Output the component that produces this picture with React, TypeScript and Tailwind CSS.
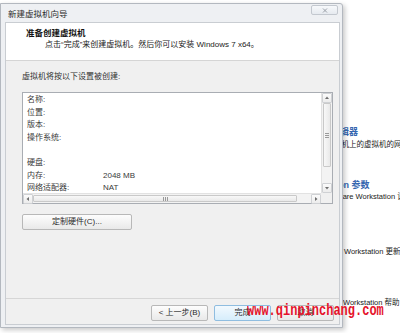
import React from "react";

type Dir = "up" | "down" | "left" | "right";

const points: Record<Dir, string> = {
  up: "1,4 3,1.5 5,4",
  down: "1,2 3,4.5 5,2",
  left: "4,1 1.5,3 4,5",
  right: "2,1 4.5,3 2,5",
};

function ArrowBox({ dir }: { dir: Dir }) {
  return (
    <div className="w-[10px] h-[10px] shrink-0 flex items-center justify-center border border-[#cfd1d4] bg-gradient-to-b from-[#fbfbfb] to-[#ececec] rounded-[1px]">
      <svg width="6" height="6" viewBox="0 0 6 6">
        <polygon points={points[dir]} fill="#6e6e6e" />
      </svg>
    </div>
  );
}

function Grip({ vertical }: { vertical?: boolean }) {
  return (
    <div className={vertical ? "flex flex-col gap-[1px]" : "flex gap-[1px]"}>
      {[0, 1, 2].map((i) => (
        <div
          key={i}
          className={vertical ? "w-[4px] h-[1px] bg-[#9a9a9a]" : "w-[1px] h-[4px] bg-[#9a9a9a]"}
        />
      ))}
    </div>
  );
}

const rows: [string, string][] = [
  ["名称:", ""],
  ["位置:", ""],
  ["版本:", ""],
  ["操作系统:", ""],
  ["", ""],
  ["硬盘:", ""],
  ["内存:", "2048 MB"],
  ["网络适配器:", "NAT"],
];

function Button({
  children,
  primary,
  className = "",
}: {
  children: React.ReactNode;
  primary?: boolean;
  className?: string;
}) {
  return (
    <div
      className={`h-[16px] flex items-center justify-center rounded-[2px] border text-[8px] leading-none text-[#2a2a2a] ${
        primary
          ? "border-[#8fbde0] bg-gradient-to-b from-[#f2f9fe] to-[#d6edfb]"
          : "border-[#b8b8b8] bg-gradient-to-b from-[#fdfdfd] to-[#e9e9e9]"
      } ${className}`}
    >
      {children}
    </div>
  );
}

export default function App() {
  return (
    <div className="w-[400px] h-[333px] bg-white overflow-hidden flex relative font-['Liberation_Sans','Noto_Sans_CJK_SC',sans-serif] text-[#1e1e1e]">
      {/* Wizard dialog */}
      <div className="w-[343px] shrink-0 pt-[3px] relative z-10">
        <div className="w-[343px] h-[325px] flex flex-col border border-[#b3b8bf] rounded-tr-[3px] bg-[#eef0f3] shadow-[2px_2px_5px_rgba(0,0,0,0.22)]">
          {/* Title bar */}
          <div className="h-[18px] shrink-0 flex items-start justify-between pl-[7px] pr-[4px]">
            <span className="mt-[6px] text-[8.5px] leading-[9px] text-[#2b2b2b]">新建虚拟机向导</span>
            <div className="mt-[1px] w-[27px] h-[10px] flex items-center justify-center border border-[#c3c8cf] rounded-[2px] bg-gradient-to-b from-[#f7f9fb] to-[#e6eaef]">
              <svg width="6" height="5" viewBox="0 0 6 5">
                <path d="M1 0.5 L5 4.5 M5 0.5 L1 4.5" stroke="#9aa0a8" strokeWidth="1" />
              </svg>
            </div>
          </div>

          {/* Content */}
          <div className="ml-[4px] w-[335px] h-[303px] flex flex-col border border-[#c9cdd2] bg-[#f0f0f0]">
            {/* Header */}
            <div className="h-[38px] shrink-0 bg-white border-b border-[#d5d5d5]">
              <div className="pl-[20px] pt-[4px] text-[8.5px] leading-[12px] font-bold text-[#111]">准备创建虚拟机</div>
              <div className="pl-[39px] text-[8px] leading-[12px] text-[#222]">
                点击“完成”来创建虚拟机。然后你可以安装 Windows 7 x64。
              </div>
            </div>

            {/* Body */}
            <div className="flex-1 pl-[16px] pt-[10px]">
              <div className="text-[8px] leading-[12px] text-[#333]">虚拟机将按以下设置被创建:</div>
              <div className="mt-[9px] w-[311px] h-[112px] border border-[#a9adb3] bg-white grid grid-cols-[1fr_11px] grid-rows-[1fr_10px]">
                <div className="pl-[4px] pt-[1px] overflow-hidden">
                  {rows.map(([label, value], i) => (
                    <div key={i} className="flex h-[12.6px] items-center text-[8px] text-[#3a3a3a]">
                      <span className="w-[76px] shrink-0">{label}</span>
                      <span>{value}</span>
                    </div>
                  ))}
                </div>
                {/* Vertical scrollbar */}
                <div className="flex flex-col bg-[#f3f3f3] border-l border-[#e2e2e2]">
                  <ArrowBox dir="up" />
                  <div className="h-[64px] mx-[1px] flex items-center justify-center border border-[#c9c9c9] rounded-[1px] bg-gradient-to-r from-[#f8f8f8] to-[#e9e9e9]">
                    <Grip vertical />
                  </div>
                  <div className="flex-1" />
                  <ArrowBox dir="down" />
                </div>
                {/* Horizontal scrollbar */}
                <div className="flex bg-[#f3f3f3] border-t border-[#e2e2e2]">
                  <ArrowBox dir="left" />
                  <div className="w-[264px] my-[1px] flex items-center justify-center border border-[#c9c9c9] rounded-[1px] bg-gradient-to-b from-[#f8f8f8] to-[#e9e9e9]">
                    <Grip />
                  </div>
                  <div className="flex-1" />
                  <ArrowBox dir="right" />
                </div>
                <div className="bg-[#f0f0f0]" />
              </div>
              <Button className="mt-[10px] w-[110px]">定制硬件(C)...</Button>
            </div>

            {/* Footer */}
            <div className="h-[26px] shrink-0 border-t border-[#d6d6d6] flex justify-end items-start gap-[6px] pt-[6px] pr-[5px]">
              <Button className="w-[57px]">&lt; 上一步(B)</Button>
              <Button primary className="w-[57px]">完成</Button>
              <Button className="w-[57px]">取消</Button>
            </div>
          </div>
        </div>
      </div>

      {/* Main window behind the dialog */}
      <div className="flex-1 overflow-hidden flex flex-col pt-[126px] whitespace-nowrap">
        <div className="h-[12px] leading-[12px] text-[9px] font-bold text-[#3466b0] -ml-[48px]">虚拟网络编辑器</div>
        <div className="mt-[1px] h-[12px] leading-[12px] text-[7.5px] text-[#222] -ml-[24px]">管理主机上的虚拟机的网络</div>
        <div className="mt-[28px] h-[12px] leading-[12px] text-[9px] font-bold text-[#3466b0] -ml-[5px]">on 参数</div>
        <div className="h-[12px] leading-[12px] text-[7.5px] text-[#222] -ml-[17px]">VMware Workstation 设置</div>
        <div className="mt-[43px] h-[12px] leading-[12px] text-[7.5px] text-[#222] ml-[1px]">Workstation 更新</div>
        <div className="mt-[39px] h-[12px] leading-[12px] text-[7.5px] text-[#222]">Workstation 帮助</div>
      </div>

      {/* Watermark */}
      <div className="absolute left-[247px] top-[302px] z-20 text-[16px] leading-[18px] font-bold font-['Liberation_Mono',monospace] text-[#e5132b] scale-x-[0.75] origin-left whitespace-nowrap">
        www.qinpinchang.com
      </div>
    </div>
  );
}
